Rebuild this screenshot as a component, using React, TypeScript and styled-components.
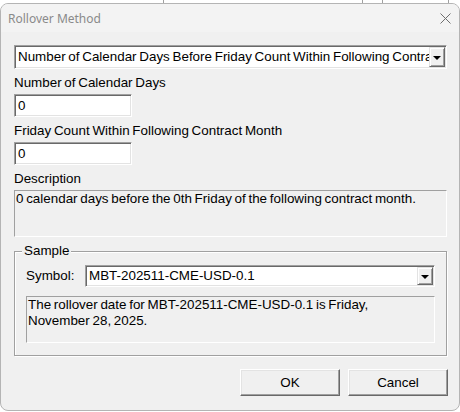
import React from 'react';
import styled, { createGlobalStyle } from 'styled-components';

const GlobalStyle = createGlobalStyle`
  html, body {
    margin: 0;
    padding: 0;
    background: #ffffff;
  }
  body {
    font-family: 'Liberation Sans', Arial, sans-serif;
    font-size: 13.4px;
    word-spacing: -1px;
    color: #000;
  }
`;

const BehindStrip = styled.div`
  height: 3px;
  overflow: hidden;
  display: flex;
  background: #fff;
`;

const BehindCell = styled.div<{ w: number; line?: boolean }>`
  width: ${(p) => p.w}px;
  flex: none;
  border-left: ${(p) => (p.line ? '1px solid #a0a0a0' : 'none')};
  font-size: 13px;
  line-height: 16px;
  margin-top: -13px;
  padding-left: 6px;
  box-sizing: border-box;
`;

const Window = styled.div`
  width: 460px;
  box-sizing: border-box;
  border: 1px solid #b4b4b4;
  border-radius: 8px;
  background: #f0f0f0;
  overflow: hidden;
`;

const TitleBar = styled.div`
  height: 28px;
  display: flex;
  align-items: center;
  justify-content: space-between;
  padding: 0 8px 0 7px;
  background: #f3f3f3;
`;

const Title = styled.span`
  font-family: 'Noto Sans', 'Open Sans', sans-serif;
  font-size: 12px;
  word-spacing: 0;
  color: #8a8a8a;
  padding-top: 1px;
`;

const CloseGlyph = styled.svg`
  width: 11px;
  height: 11px;
`;

const Client = styled.div`
  padding: 13px 12px 14px 13px;
  display: flex;
  flex-direction: column;
`;

const Combo = styled.div<{ h: number }>`
  height: ${(p) => p.h}px;
  box-sizing: border-box;
  display: flex;
  align-items: stretch;
  background: #fff;
  border: 1px solid;
  border-color: #a0a0a0 #ffffff #ffffff #a0a0a0;
  box-shadow: inset 1px 1px 0 #696969, inset -1px -1px 0 #e3e3e3;
  padding: 1px;
`;

const ComboText = styled.div`
  flex: 1;
  display: flex;
  align-items: center;
  padding-left: 2px;
  white-space: nowrap;
  overflow: hidden;
  line-height: 16px;
`;

const ComboButton = styled.div`
  width: 16px;
  flex: none;
  box-sizing: border-box;
  display: flex;
  align-items: center;
  justify-content: center;
  background: #f0f0f0;
  border: 1px solid;
  border-color: #e3e3e3 #696969 #696969 #e3e3e3;
  box-shadow: inset 1px 1px 0 #fff, inset -1px -1px 0 #a0a0a0;
`;

const Arrow = styled.span`
  width: 0;
  height: 0;
  border-left: 4px solid transparent;
  border-right: 4px solid transparent;
  border-top: 4px solid #000;
  margin-top: 1px;
`;

const Label = styled.div<{ top: number }>`
  margin-top: ${(p) => p.top}px;
  line-height: 16px;
  white-space: nowrap;
`;

const Edit = styled.div`
  margin-top: 3px;
  width: 118px;
  height: 23px;
  box-sizing: border-box;
  background: #fff;
  border: 1px solid;
  border-color: #a0a0a0 #ffffff #ffffff #a0a0a0;
  box-shadow: inset 1px 1px 0 #696969, inset -1px -1px 0 #e3e3e3;
  padding: 2px 3px;
  line-height: 17px;
`;

const ReadOnlyBox = styled.div<{ top: number }>`
  margin-top: ${(p) => p.top}px;
  height: 47px;
  box-sizing: border-box;
  border: 1px solid;
  border-color: #a0a0a0 #ffffff #ffffff #a0a0a0;
  padding: 0 1px;
  line-height: 16px;
  background: #f0f0f0;
`;

const Group = styled.div`
  position: relative;
  margin-top: 14px;
  border: 1px solid #a0a0a0;
  box-shadow: 1px 1px 0 #fff, inset 1px 1px 0 #fff;
  padding: 13px 11px 12px 11px;
  display: flex;
  flex-direction: column;
`;

const Legend = styled.span`
  position: absolute;
  top: -9px;
  left: 7px;
  padding: 0 2px;
  background: #f0f0f0;
  line-height: 16px;
`;

const SymbolRow = styled.div`
  display: flex;
  align-items: center;
`;

const SymbolLabel = styled.span`
  width: 59px;
  flex: none;
  line-height: 16px;
`;

const SymbolCombo = styled(Combo)`
  flex: 1;
`;

const ButtonRow = styled.div`
  margin-top: 13px;
  margin-right: -1px;
  display: flex;
  justify-content: flex-end;
  gap: 8px;
`;

const Button = styled.button`
  width: 100px;
  height: 27px;
  box-sizing: border-box;
  font-family: 'Liberation Sans', Arial, sans-serif;
  font-size: 13.4px;
  color: #000;
  background: #f0f0f0;
  border: 1px solid;
  border-color: #ffffff #696969 #696969 #ffffff;
  box-shadow: inset -1px -1px 0 #a0a0a0, inset 1px 1px 0 #e3e3e3;
  padding: 0;
`;

const DropButton = () => (
  <ComboButton>
    <Arrow />
  </ComboButton>
);

export default function App() {
  return (
    <>
      <GlobalStyle />
      <BehindStrip>
        <BehindCell w={163} />
        <BehindCell w={199} line>
          Name
        </BehindCell>
        <BehindCell w={20} line />
        <BehindCell w={66} line>
          Value
        </BehindCell>
        <BehindCell w={12} line />
      </BehindStrip>
      <Window>
        <TitleBar>
          <Title>Rollover Method</Title>
          <CloseGlyph viewBox="0 0 11 11">
            <path d="M0.5 0.5 L10.5 10.5 M10.5 0.5 L0.5 10.5" stroke="#6e6e6e" strokeWidth="1" fill="none" />
          </CloseGlyph>
        </TitleBar>
        <Client>
          <Combo h={24}>
            <ComboText>Number of Calendar Days Before Friday Count Within Following Contract Month</ComboText>
            <DropButton />
          </Combo>
          <Label top={6}>Number of Calendar Days</Label>
          <Edit>0</Edit>
          <Label top={6}>Friday Count Within Following Contract Month</Label>
          <Edit>0</Edit>
          <Label top={6}>Description</Label>
          <ReadOnlyBox top={3}>0 calendar days before the 0th Friday of the following contract month.</ReadOnlyBox>
          <Group>
            <Legend>Sample</Legend>
            <SymbolRow>
              <SymbolLabel>Symbol:</SymbolLabel>
              <SymbolCombo h={22}>
                <ComboText>MBT-202511-CME-USD-0.1</ComboText>
                <DropButton />
              </SymbolCombo>
            </SymbolRow>
            <ReadOnlyBox top={9}>
              The rollover date for MBT-202511-CME-USD-0.1 is Friday,
              <br />
              November 28, 2025.
            </ReadOnlyBox>
          </Group>
          <ButtonRow>
            <Button>OK</Button>
            <Button>Cancel</Button>
          </ButtonRow>
        </Client>
      </Window>
    </>
  );
}
